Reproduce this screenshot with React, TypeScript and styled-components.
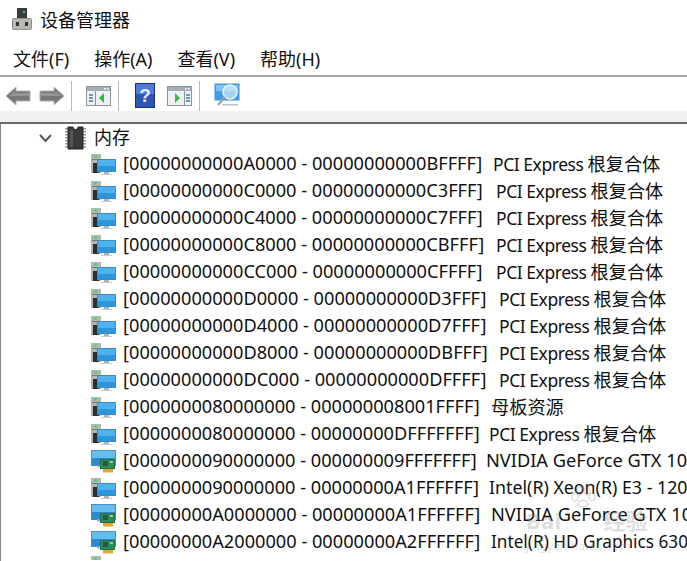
import * as React from 'react';
import styled, {createGlobalStyle} from 'styled-components';

const GlobalStyle = createGlobalStyle`
    html, body {
        margin: 0;
        padding: 0;
        background: #fff;
    }
    body {
        font-family: "Noto Sans", "Noto Sans CJK SC", sans-serif;
        color: #111;
    }
`;

const Page = styled.div`
    position: relative;
    width: 687px;
    height: 561px;
    overflow: hidden;
    background: #fff;
`;

const TitleBar = styled.div`
    display: flex;
    align-items: center;
    gap: 7px;
    height: 37px;
    padding: 0 0 3px 11px;
    font-size: 18px;
`;

const MenuBar = styled.div`
    display: flex;
    gap: 25px;
    height: 35px;
    align-items: center;
    padding: 1px 0 0 13px;
    box-sizing: border-box;
    font-size: 18px;
`;

const ToolBar = styled.div`
    display: flex;
    align-items: center;
    height: 36px;
    padding-top: 3px;
    border-top: 2px solid #a8a8a8;
    box-sizing: border-box;
`;

const ToolSlot = styled.div<{$ml: number}>`
    display: flex;
    margin-left: ${({$ml}) => $ml}px;
`;

const ToolSep = styled.div<{$ml: number}>`
    width: 1px;
    height: 30px;
    margin-left: ${({$ml}) => $ml}px;
    background: #b8b8b8;
`;

const Band = styled.div`
    height: 11px;
    background: #f1f1f1;
    border-bottom: 2px solid #6a6a6a;
`;

const Tree = styled.div`
    border-left: 1px solid #8a8a8a;
    height: 437px;
`;

const RootRow = styled.div`
    display: flex;
    align-items: center;
    height: 27px;
    padding-left: 37px;
    font-size: 18px;
`;

const Chevron = styled.svg`
    width: 15px;
    height: 10px;
    margin-right: 12px;
`;

const RootLabel = styled.span`
    margin-left: 8px;
    padding-bottom: 3px;
`;

const Row = styled.div`
    display: flex;
    align-items: center;
    height: 27px;
    padding-left: 90px;
    white-space: pre;

    svg {
        flex: none;
    }
`;

const RangeText = styled.span<{$w: number}>`
    width: ${({$w}) => $w}px;
    margin-left: 7px;
    padding-bottom: 3px;
    flex: none;
    font-size: 18.2px;
`;

const NameText = styled.span<{$size: number; $spacing?: number}>`
    flex: none;
    padding-bottom: 3px;
    font-size: ${({$size}) => $size}px;
    letter-spacing: ${({$spacing}) => $spacing ?? 0}px;
`;

const CjkText = styled.span`
    font-size: 18.2px;
    letter-spacing: 0;
`;

const PartialRow = styled.div`
    height: 4px;
    padding-left: 90px;
    overflow: hidden;
`;

const Watermark = styled.div`
    position: absolute;
    left: 526px;
    bottom: 8px;
    width: 122px;
    color: rgba(140, 140, 140, 0.3);
    font-size: 11.500px;
    letter-spacing: 0.3px;
    white-space: nowrap;
    pointer-events: none;
`;

const WatermarkPaw = styled.svg`
    display: block;
    margin-left: 44px;
`;

const WatermarkLogo = styled.div`
    display: flex;
    justify-content: space-between;
    font-size: 22px;
    font-weight: 700;
    line-height: 24px;
    margin-bottom: 6px;
`;

const DeviceManagerIcon = () => (
    <svg width="22" height="24" viewBox="0 0 22 24">
        <rect x="6" y="1" width="10" height="11" fill="#3c3c3c" />
        <rect x="12" y="4" width="2" height="2" fill="#3fd06a" />
        <rect x="1.500" y="11.500" width="19" height="11" rx="1" fill="#b8b8b0" stroke="#8e8e88" />
        <rect x="5" y="15" width="3" height="4" fill="#333" />
        <rect x="14" y="15" width="3" height="4" fill="#333" />
    </svg>
);

const BackIcon = ({flip}: {flip?: boolean}) => (
    <svg width="26" height="20" viewBox="0 0 26 20" style={flip ? {transform: 'scaleX(-1)'} : undefined}>
        <path d="M1 10 L11 1 V5 H25 V15 H11 V19 Z" fill="#787878" stroke="#b4b4b4" strokeWidth="1" />
        <path d="M4 10 L10 5 V7 H24 V10 Z" fill="#949494" />
    </svg>
);

const PaneIcon = ({right}: {right?: boolean}) => (
    <svg width="25" height="22" viewBox="0 0 25 22">
        <rect x="0.500" y="1.500" width="24" height="19" fill="#eef1f3" stroke="#8a9499" />
        <rect x="1" y="2" width="23" height="4" fill="#a5aeb4" />
        <rect x="18" y="3" width="1.500" height="1.500" fill="#fff" />
        <rect x="21" y="3" width="1.500" height="1.500" fill="#fff" />
        <rect x={right ? 17 : 9} y="6" width="1" height="14" fill="#8a9499" />
        {[9, 12, 15].map((y) => (
            <rect key={y} x={right ? 19 : 3} y={y} width="4" height="2" fill="#6f98b8" />
        ))}
        <path d={right ? 'M8 8 L13 13 L8 18 Z' : 'M18 8 L13 13 L18 18 Z'} fill="#3cb44a" />
    </svg>
);

const HelpIcon = () => (
    <svg width="20" height="25" viewBox="0 0 20 25">
        <rect x="0.500" y="0.500" width="19" height="24" fill="#2f54b4" stroke="#1c3278" />
        <rect x="1" y="1" width="18" height="10" fill="#4f7ad6" />
        <text x="10" y="19" textAnchor="middle" fontSize="19" fontWeight="700" fontFamily="Liberation Sans, sans-serif" fill="#e8ecf6">?</text>
    </svg>
);

const ScanIcon = () => (
    <svg width="26" height="26" viewBox="0 0 26 26">
        <rect x="1" y="1" width="24" height="16" fill="#3f9fe6" stroke="#4a90c8" />
        <rect x="2" y="2" width="22" height="6" fill="#7cc4f2" />
        <circle cx="16" cy="9" r="7" fill="#cfe9f8" fillOpacity="0.7" stroke="#e8f4fb" strokeWidth="1.500" />
        <path d="M11 14 L4 22" stroke="#9aa0a4" strokeWidth="2" />
        <rect x="8" y="21" width="16" height="1.500" fill="#b8c4cc" />
    </svg>
);

const ChipIcon = () => (
    <svg width="21" height="24" viewBox="0 0 21 24">
        {[2, 5, 8, 11, 14, 17, 20].map((y) => (
            <g key={y}>
                <rect x="0" y={y} width="3" height="1.500" fill="#9a9a9a" />
                <rect x="18" y={y} width="3" height="1.500" fill="#9a9a9a" />
            </g>
        ))}
        <path d="M3 1 H8 A2.500 2.500 0 0 0 13 1 H18 V23 H3 Z" fill="#3a3a3a" stroke="#222" />
        <rect x="5" y="4" width="3" height="17" fill="#555" />
    </svg>
);

const SystemIcon = () => (
    <svg width="25" height="22" viewBox="0 0 25 22">
        <rect x="0" y="0" width="10" height="19" fill="#b4b6b4" />
        <rect x="2" y="9" width="6" height="10" fill="#2e2e2e" />
        <rect x="3" y="1.500" width="3" height="2" fill="#48d060" />
        <rect x="1" y="5" width="8" height="1" fill="#777" />
        <rect x="6.500" y="5.500" width="18" height="12" fill="#1e7fc8" stroke="#3a8cc4" />
        <rect x="7" y="6" width="17" height="6" fill="#4fb2ee" />
        <rect x="7" y="12" width="17" height="5" fill="#2c96dc" />
        <rect x="13" y="18" width="5" height="2" fill="#a8b4bc" />
        <rect x="10" y="20" width="11" height="1" fill="#c4ccd2" />
    </svg>
);

const DisplayIcon = () => (
    <svg width="25" height="23" viewBox="0 0 25 23">
        <rect x="0.500" y="0.500" width="24" height="15" fill="#2a8ad4" stroke="#4a90bc" />
        <rect x="1" y="1" width="23" height="7" fill="#66bdf0" />
        <rect x="6" y="15.500" width="6" height="2" fill="#a8b4bc" />
        <rect x="9.500" y="9.500" width="14" height="9" fill="#2f8a5c" stroke="#246c48" />
        <rect x="12" y="11" width="5" height="5" fill="#1f5a3c" />
        <rect x="19" y="11" width="3" height="2" fill="#8fd0a8" />
        <rect x="12" y="19" width="10" height="3.500" fill="#e0a830" />
    </svg>
);

type Device = {
    icon: 'system' | 'display';
    range: string;
    rangeWidth: number;
    name: string;
    nameSize: number;
    nameSpacing?: number;
    cjk?: string;
};

const PCI = {name: 'PCI Express ', nameSize: 17.5, nameSpacing: -0.45, cjk: '根复合体'};

const devices: Device[] = [
    {icon: 'system', range: '[00000000000A0000 - 00000000000BFFFF]', rangeWidth: 370, ...PCI},
    {icon: 'system', range: '[00000000000C0000 - 00000000000C3FFF]', rangeWidth: 373, ...PCI},
    {icon: 'system', range: '[00000000000C4000 - 00000000000C7FFF]', rangeWidth: 373, ...PCI},
    {icon: 'system', range: '[00000000000C8000 - 00000000000CBFFF]', rangeWidth: 373, ...PCI},
    {icon: 'system', range: '[00000000000CC000 - 00000000000CFFFF]', rangeWidth: 373, ...PCI},
    {icon: 'system', range: '[00000000000D0000 - 00000000000D3FFF]', rangeWidth: 376, ...PCI},
    {icon: 'system', range: '[00000000000D4000 - 00000000000D7FFF]', rangeWidth: 376, ...PCI},
    {icon: 'system', range: '[00000000000D8000 - 00000000000DBFFF]', rangeWidth: 376, ...PCI},
    {icon: 'system', range: '[00000000000DC000 - 00000000000DFFFF]', rangeWidth: 376, ...PCI},
    {icon: 'system', range: '[0000000080000000 - 000000008001FFFF]', rangeWidth: 368, name: '', nameSize: 18, cjk: '母板资源'},
    {icon: 'system', range: '[0000000080000000 - 00000000DFFFFFFF]', rangeWidth: 366, ...PCI},
    {icon: 'display', range: '[0000000090000000 - 000000009FFFFFFF]', rangeWidth: 363, name: 'NVIDIA GeForce GTX 10', nameSize: 18.2},
    {icon: 'system', range: '[0000000090000000 - 00000000A1FFFFFF]', rangeWidth: 366, name: 'Intel(R) Xeon(R) E3 - 120', nameSize: 17.8},
    {icon: 'display', range: '[00000000A0000000 - 00000000A1FFFFFF]', rangeWidth: 368, name: 'NVIDIA GeForce GTX 10', nameSize: 18.2},
    {icon: 'display', range: '[00000000A2000000 - 00000000A2FFFFFF]', rangeWidth: 368, name: 'Intel(R) HD Graphics 630', nameSize: 17.2},
];

const App: React.FC = () => {
    return (
        <Page>
            <GlobalStyle />
            <TitleBar>
                <DeviceManagerIcon />
                设备管理器
            </TitleBar>
            <MenuBar>
                <span>文件(F)</span>
                <span>操作(A)</span>
                <span>查看(V)</span>
                <span>帮助(H)</span>
            </MenuBar>
            <ToolBar>
                <ToolSlot $ml={5}><BackIcon /></ToolSlot>
                <ToolSlot $ml={8}><BackIcon flip /></ToolSlot>
                <ToolSep $ml={6} />
                <ToolSlot $ml={14}><PaneIcon /></ToolSlot>
                <ToolSep $ml={7} />
                <ToolSlot $ml={16}><HelpIcon /></ToolSlot>
                <ToolSlot $ml={12}><PaneIcon right /></ToolSlot>
                <ToolSep $ml={7} />
                <ToolSlot $ml={14}><ScanIcon /></ToolSlot>
            </ToolBar>
            <Band />
            <Tree>
                <RootRow>
                    <Chevron viewBox="0 0 15 10">
                        <path d="M2 2 L7.500 8 L13 2" fill="none" stroke="#555" strokeWidth="2" />
                    </Chevron>
                    <ChipIcon />
                    <RootLabel>内存</RootLabel>
                </RootRow>
                {devices.map((device, i) => (
                    <Row key={i}>
                        {device.icon === 'system' ? <SystemIcon /> : <DisplayIcon />}
                        <RangeText $w={device.rangeWidth}>{device.range}</RangeText>
                        <NameText $size={device.nameSize} $spacing={device.nameSpacing}>
                            {device.name}
                            {device.cjk && <CjkText>{device.cjk}</CjkText>}
                        </NameText>
                    </Row>
                ))}
                <PartialRow><SystemIcon /></PartialRow>
            </Tree>
            <Watermark>
                <WatermarkPaw width="26" height="22" viewBox="0 0 26 22">
                    <g fill="none" stroke="currentColor" strokeWidth="1.500">
                        <ellipse cx="5" cy="11" rx="3" ry="4" />
                        <ellipse cx="10" cy="5" rx="3" ry="4" />
                        <ellipse cx="17" cy="5" rx="3" ry="4" />
                        <ellipse cx="22" cy="11" rx="3" ry="4" />
                        <path d="M8 19 C8 13 18 13 18 19 C18 21 8 21 8 19 Z" />
                    </g>
                </WatermarkPaw>
                <WatermarkLogo>
                    <span>Bai</span>
                    <span>经验</span>
                </WatermarkLogo>
                jingyan.baidu.com
            </Watermark>
        </Page>
    );
};

export default App;
